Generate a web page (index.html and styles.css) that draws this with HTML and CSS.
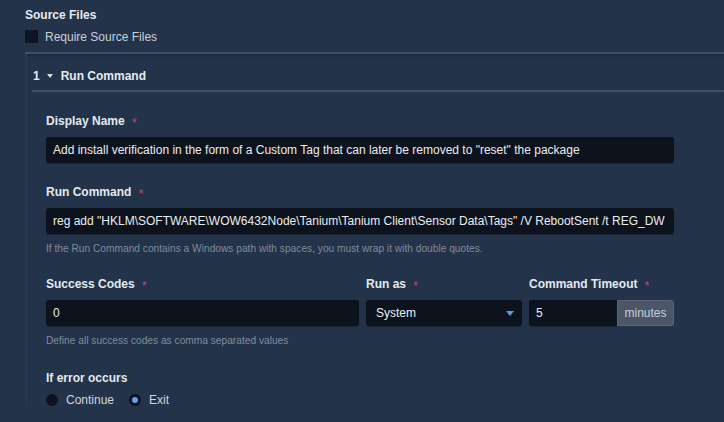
FILE: index.html
```html
<!DOCTYPE html>
<html lang="en">
<head>
    <meta charset="UTF-8">
    <title>Package - Run Command</title>
    <link rel="stylesheet" href="styles.css">
</head>
<body>
    <div class="page">
        <h2 class="group-title">Source Files</h2>
        <label class="check-row">
            <span class="checkbox"></span>
            Require Source Files
        </label>

        <div class="divider"></div>

        <div class="command-panel">
            <div class="panel-header">
                <span class="step-num">1</span>
                <span class="caret"></span>
                <span class="step-title">Run Command</span>
            </div>

            <div class="panel-body">
                <div class="field">
                    <div class="field-label">Display Name <span class="req">*</span></div>
                    <div class="text-input">Add install verification in the form of a Custom Tag that can later be removed to "reset" the package</div>
                </div>

                <div class="field">
                    <div class="field-label">Run Command <span class="req">*</span></div>
                    <div class="text-input">reg add "HKLM\SOFTWARE\WOW6432Node\Tanium\Tanium Client\Sensor Data\Tags" /V RebootSent /t REG_DW</div>
                    <div class="help">If the Run Command contains a Windows path with spaces, you must wrap it with double quotes.</div>
                </div>

                <div class="field field-row">
                    <div class="col">
                        <div class="field-label">Success Codes <span class="req">*</span></div>
                        <div class="text-input">0</div>
                    </div>
                    <div class="col">
                        <div class="field-label">Run as <span class="req">*</span></div>
                        <div class="text-input select">
                            System
                            <span class="select-arrow"></span>
                        </div>
                    </div>
                    <div class="col">
                        <div class="field-label">Command Timeout <span class="req">*</span></div>
                        <div class="input-group">
                            <div class="text-input">5</div>
                            <div class="addon">minutes</div>
                        </div>
                    </div>
                    <div class="help span-all">Define all success codes as comma separated values</div>
                </div>

                <div class="field">
                    <div class="field-label">If error occurs</div>
                    <div class="radio-row">
                        <label class="radio-opt"><span class="radio"></span>Continue</label>
                        <label class="radio-opt"><span class="radio checked"></span>Exit</label>
                    </div>
                </div>
            </div>
        </div>
    </div>
</body>
</html>
```

FILE: styles.css
```css
* {
    margin: 0;
    padding: 0;
    box-sizing: border-box;
}

body {
    font-family: "Liberation Sans", Arial, Helvetica, sans-serif;
    background-color: #233349;
    color: #e3e8ee;
    font-size: 12px;
    overflow: hidden;
}

.page {
    padding: 8px 0 0 25px;
}

.group-title {
    font-size: 12px;
    line-height: 14px;
    font-weight: bold;
    color: #e6eaf0;
}

.check-row {
    display: flex;
    align-items: center;
    gap: 7px;
    margin-top: 8px;
    height: 13px;
    color: #c9d0da;
}

.checkbox {
    width: 13px;
    height: 13px;
    background: #0e1421;
    border-radius: 1px;
}

.divider {
    margin-top: 9px;
    border-top: 2px solid #415169;
}

.command-panel {
    margin-left: 1px;
    border-left: 1px solid #2a3a51;
    box-shadow: inset 0 3px 3px -2px rgba(10, 18, 30, 0.5);
}

.panel-header {
    display: flex;
    align-items: center;
    margin-left: 5px;
    height: 38px;
    padding: 7px 0 0 1px;
    border-bottom: 2px solid #3e4e66;
    font-weight: bold;
    color: #e6eaf0;
}

.caret {
    width: 0;
    height: 0;
    margin: 1px 8px 0 7px;
    border-left: 3.5px solid transparent;
    border-right: 3.5px solid transparent;
    border-top: 4px solid #d8dde5;
}

.panel-body {
    padding: 22px 0 0 19px;
    width: 647px;
}

.field {
    margin-bottom: 22px;
}

.field-label {
    font-weight: bold;
    line-height: 14px;
    margin-bottom: 9px;
    color: #e4e9ef;
}

.req {
    display: inline-block;
    color: #c34d6f;
    font-weight: normal;
    margin-left: 4px;
    transform: translateY(2px);
}

.text-input {
    height: 26px;
    line-height: 26px;
    background: #0d131d;
    border-radius: 3px;
    padding: 0 7px;
    color: #e9edf2;
    white-space: nowrap;
    overflow: hidden;
    box-shadow: 0 1px 1px rgba(0, 0, 0, 0.25);
}

.help {
    margin-top: 9px;
    font-size: 10.2px;
    line-height: 12px;
    color: #808c9c;
}

.field-row {
    display: grid;
    grid-template-columns: 313px 156px 1fr;
    column-gap: 7px;
    width: 628px;
    margin-top: 1px;
    margin-bottom: 24px;
}

.span-all {
    grid-column: 1 / -1;
}

.select {
    position: relative;
    padding-left: 10px;
}

.select-arrow {
    position: absolute;
    right: 8px;
    top: 11px;
    width: 0;
    height: 0;
    border-left: 4.5px solid transparent;
    border-right: 4.5px solid transparent;
    border-top: 5px solid #5a9de3;
}

.input-group {
    display: flex;
}

.input-group .text-input {
    flex: 1;
    border-radius: 3px 0 0 3px;
}

.addon {
    width: 57px;
    height: 26px;
    line-height: 25px;
    text-align: center;
    background: #4b5669;
    border: 1px solid #5a6578;
    border-radius: 0 3px 3px 0;
    color: #c7ced7;
}

.radio-row {
    display: flex;
    align-items: center;
    gap: 15px;
    height: 12px;
    color: #d0d6de;
}

.radio-opt {
    display: flex;
    align-items: center;
    gap: 8px;
}

.radio {
    width: 12px;
    height: 12px;
    border-radius: 50%;
    background: #0c1220;
    display: flex;
    align-items: center;
    justify-content: center;
}

.radio.checked::after {
    content: "";
    width: 6px;
    height: 6px;
    border-radius: 50%;
    background: #5ea5ee;
}
```
